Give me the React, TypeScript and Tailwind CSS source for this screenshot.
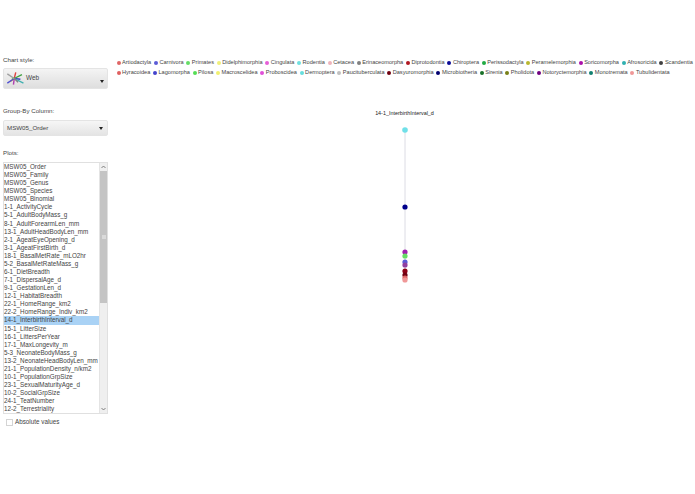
const legendRows = [
  [
    ["Artiodactyla", "#e06666"],
    ["Carnivora", "#5b5bd6"],
    ["Primates", "#66dd66"],
    ["Didelphimorphia", "#f0f07a"],
    ["Cingulata", "#e65fd8"],
    ["Rodentia", "#70e0e0"],
    ["Cetacea", "#eeb4bc"],
    ["Erinaceomorpha", "#808080"],
    ["Diprotodontia", "#b01822"],
    ["Chiroptera", "#0a0a96"],
    ["Perissodactyla", "#22aa44"],
    ["Peramelemorphia", "#b8b830"],
    ["Soricomorpha", "#aa10aa"],
    ["Afrosoricida", "#30b0b0"],
    ["Scandentia", "#404040"],
  ],
  [
    ["Hyracoidea", "#e06060"],
    ["Lagomorpha", "#4444cc"],
    ["Pilosa", "#55dd55"],
    ["Macroscelidea", "#f0f070"],
    ["Proboscidea", "#e050d8"],
    ["Dermoptera", "#66dddd"],
    ["Paucituberculata", "#c0c0c0"],
    ["Dasyuromorphia", "#700010"],
    ["Microbiotheria", "#000070"],
    ["Sirenia", "#187028"],
    ["Pholidota", "#788018"],
    ["Notoryctemorphia", "#700080"],
    ["Monotremata", "#108070"],
    ["Tubulidentata", "#f09898"],
  ],
];

const plots = [
  "MSW05_Order", "MSW05_Family", "MSW05_Genus", "MSW05_Species", "MSW05_Binomial",
  "1-1_ActivityCycle", "5-1_AdultBodyMass_g", "8-1_AdultForearmLen_mm", "13-1_AdultHeadBodyLen_mm",
  "2-1_AgeatEyeOpening_d", "3-1_AgeatFirstBirth_d", "18-1_BasalMetRate_mLO2hr", "5-2_BasalMetRateMass_g",
  "6-1_DietBreadth", "7-1_DispersalAge_d", "9-1_GestationLen_d", "12-1_HabitatBreadth", "22-1_HomeRange_km2",
  "22-2_HomeRange_Indiv_km2", "14-1_InterbirthInterval_d", "15-1_LitterSize", "16-1_LittersPerYear",
  "17-1_MaxLongevity_m", "5-3_NeonateBodyMass_g", "13-2_NeonateHeadBodyLen_mm", "21-1_PopulationDensity_n/km2",
  "10-1_PopulationGrpSize", "23-1_SexualMaturityAge_d", "10-2_SocialGrpSize", "24-1_TeatNumber", "12-2_Terrestriality",
];

const dots = [
  [207, "#00008b"],
  [252, "#a020b0"],
  [256, "#66dd66"],
  [262, "#5b5bd6"],
  [265, "#9040a0"],
  [271, "#8b0015"],
  [275, "#700010"],
  [278, "#e06666"],
  [280, "#f09898"],
] as const;

function WebIcon() {
  const spokes = [
    ["#e04040", 14, 1], ["#40a040", 22, 4], ["#4040c0", 20, 10], ["#40b0b0", 24, 15],
    ["#808080", 17, 14], ["#b040b0", 11, 17], ["#e0a030", 7, 13], ["#5050d0", 3, 15],
    ["#50b050", 9, 8], ["#a0a0a0", 3, 3],
  ] as const;
  return (
    <svg width="20" height="17" viewBox="0 0 26 18" className="shrink-0">
      {spokes.map(([c, x, y]) => (
        <line key={`${x}-${y}`} x1="12" y1="9" x2={x} y2={y} stroke={c} strokeWidth="1.8" />
      ))}
    </svg>
  );
}

function Caret() {
  return <div className="w-0 h-0 border-x-[2.5px] border-x-transparent border-t-[3px] border-t-[#222]" />;
}

export default function App() {
  return (
    <div className="flex w-[695px] h-[494px] overflow-hidden bg-white text-[#444] font-['Liberation_Sans',sans-serif] text-[6.3px] leading-none">
      {/* SIDEBAR */}
      <aside className="w-[114px] shrink-0 pl-[3px] pr-[6px] pt-[57px]">
        <div className="h-[11px] text-[6.2px]">Chart style:</div>
        <div className="flex items-center h-[21px] pl-[1px] pr-[3px] rounded-[2px] border border-[#e4e4e4] bg-gradient-to-b from-[#f4f4f4] to-[#dedede]">
          <WebIcon />
          <span className="ml-[1px] flex-1 text-[6.4px]">Web</span>
          <div className="mt-[6px]"><Caret /></div>
        </div>

        <div className="mt-[19px] h-[12px] text-[6.2px]">Group-By Column:</div>
        <div className="flex items-center justify-between h-[16px] pl-[3px] pr-[4px] rounded-[2px] border border-[#e4e4e4] bg-gradient-to-b from-[#f6f6f6] to-[#e4e4e4]">
          <span className="text-[6.2px]">MSW05_Order</span>
          <Caret />
        </div>

        <div className="mt-[14px] h-[12px] text-[6.2px]">Plots:</div>
        <div className="flex h-[252px] border border-[#e0e0e0]">
          <ul className="flex-1 min-w-0 overflow-hidden">
            {plots.map((p) => (
              <li
                key={p}
                className={`h-[8.08px] leading-[8px] whitespace-nowrap ${p === "14-1_InterbirthInterval_d" ? "bg-[#a9d2f5]" : ""}`}
              >
                {p}
              </li>
            ))}
          </ul>
          <div className="w-[8px] shrink-0 flex flex-col bg-[#efefef] border-l border-[#e4e4e4]">
            <div className="h-[8px] flex items-center justify-center text-[#666]">
              <svg width="5" height="4" viewBox="0 0 5 4"><path d="M0.5 3 2.5 1 4.5 3" fill="none" stroke="currentColor" strokeWidth="0.8" /></svg>
            </div>
            <div className="h-[132px] flex items-center justify-center bg-[#c4c4c4]">
              <div className="w-[4px] h-[4px] bg-[#dadada]" />
            </div>
            <div className="flex-1" />
            <div className="h-[8px] flex items-center justify-center text-[#666]">
              <svg width="5" height="4" viewBox="0 0 5 4"><path d="M0.5 1 2.5 3 4.5 1" fill="none" stroke="currentColor" strokeWidth="0.8" /></svg>
            </div>
          </div>
        </div>

        <label className="flex items-center mt-[5px] ml-[3px] gap-[2px]">
          <span className="w-[7px] h-[7px] border border-[#d4d4d4] bg-white" />
          <span className="text-[6.3px]">Absolute values</span>
        </label>
      </aside>

      {/* CHART AREA */}
      <main className="flex-1 min-w-0 pt-[59px]">
        <div className="flex flex-col gap-[2px]">
          {legendRows.map((row, i) => (
            <div key={i} className="flex h-[8px] items-center gap-[2.7px] pl-[2.5px] whitespace-nowrap text-[5.6px] text-[#444]">
              {row.map(([name, color]) => (
                <span key={name} className="flex items-center gap-[1.5px]">
                  <span className="w-[4px] h-[4px] rounded-full" style={{ backgroundColor: color }} />
                  {name}
                </span>
              ))}
            </div>
          ))}
        </div>
        <div className="mt-[34px] text-center text-[5.4px] text-[#222]">14-1_InterbirthInterval_d</div>
        <svg width="581" height="180" viewBox="0 118 581 180" className="mt-[2px] block">
          <line x1="291" y1="130" x2="291" y2="280" stroke="#dcdce4" strokeWidth="1" />
          <circle cx="291" cy="130" r="2.8" fill="#70e0e8" />
          {dots.map(([y, c]) => (
            <circle key={y} cx="291" cy={y} r="2.6" fill={c} />
          ))}
        </svg>
      </main>
    </div>
  );
}
